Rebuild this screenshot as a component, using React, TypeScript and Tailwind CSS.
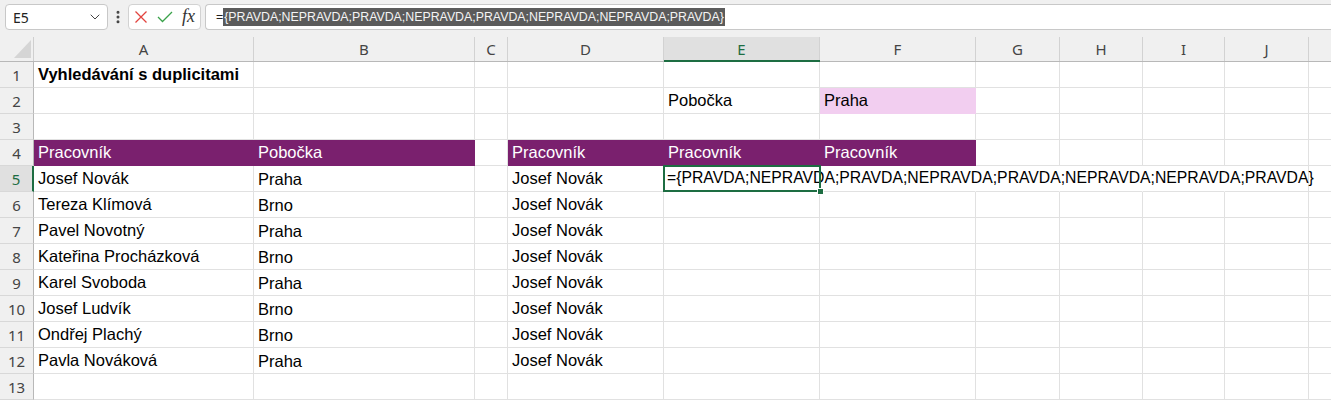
import React from "react";
import { ChevronDown, EllipsisVertical } from "lucide-react";

const COLS = [
  { key: "A", w: 221 },
  { key: "B", w: 221 },
  { key: "C", w: 33 },
  { key: "D", w: 156 },
  { key: "E", w: 156 },
  { key: "F", w: 156 },
  { key: "G", w: 84 },
  { key: "H", w: 83 },
  { key: "I", w: 82 },
  { key: "J", w: 84 },
  { key: "K", w: 40 },
];

const people: [string, string][] = [
  ["Josef Novák", "Praha"],
  ["Tereza Klímová", "Brno"],
  ["Pavel Novotný", "Praha"],
  ["Kateřina Procházková", "Brno"],
  ["Karel Svoboda", "Praha"],
  ["Josef Ludvík", "Brno"],
  ["Ondřej Plachý", "Brno"],
  ["Pavla Nováková", "Praha"],
];

const FORMULA = "{PRAVDA;NEPRAVDA;PRAVDA;NEPRAVDA;PRAVDA;NEPRAVDA;NEPRAVDA;PRAVDA}";

type CellSpec = {
  text?: string;
  bold?: boolean;
  fill?: "purple" | "pink";
  noRight?: boolean;
  lower?: boolean;
};

function getCell(row: number, col: string): CellSpec {
  if (row === 1 && col === "A") return { text: "Vyhledávání s duplicitami", bold: true };
  if (row === 2 && col === "E") return { text: "Pobočka" };
  if (row === 2 && col === "F") return { text: "Praha", fill: "pink" };
  if (row === 4) {
    if (col === "A") return { text: "Pracovník", fill: "purple" };
    if (col === "B") return { text: "Pobočka", fill: "purple" };
    if (col === "D" || col === "E" || col === "F") return { text: "Pracovník", fill: "purple" };
  }
  if (row >= 5 && row <= 12) {
    const p = people[row - 5];
    if (col === "A") return { text: p[0] };
    if (col === "B") return { text: p[1], lower: true };
    if (col === "D") return { text: "Josef Novák" };
  }
  if (row === 5 && ["E", "F", "G", "H", "I"].includes(col)) return { noRight: true };
  return {};
}

function Cell({ row, col, w }: { row: number; col: string; w: number }) {
  const spec = getCell(row, col);
  const isSel = row === 5 && col === "E";
  const fillCls =
    spec.fill === "purple"
      ? "bg-[#7a206e] text-white border-b-[#7a206e]"
      : spec.fill === "pink"
      ? "bg-[#f2cef0] text-black border-b-[#f2cef0]"
      : "bg-white text-black border-b-[#e1e1e1]";
  const rightCls = spec.fill
    ? spec.fill === "purple"
      ? "border-r-[#7a206e]"
      : "border-r-[#f2cef0]"
    : spec.noRight
    ? "border-r-white"
    : "border-r-[#e1e1e1]";
  return (
    <div
      className={`relative h-full shrink-0 border-r border-b flex items-end pl-[4px] ${fillCls} ${rightCls} ${
        isSel ? "overflow-visible z-10" : "overflow-hidden"
      }`}
      style={{ width: w }}
    >
      {spec.text && (
        <span
          className={`whitespace-nowrap leading-[20px] text-[16.5px] ${spec.bold ? "font-bold" : ""} ${
            spec.lower ? "mb-[2px]" : "mb-[3px]"
          }`}
        >
          {spec.text}
        </span>
      )}
      {isSel && (
        <>
          <span className="absolute left-[3px] bottom-[3px] whitespace-nowrap leading-[20px] text-[15.75px] text-black">
            ={FORMULA}
          </span>
          <div className="absolute left-[-1px] top-[-1px] w-[158px] h-[27px] border-2 border-[#1d6d42] pointer-events-none" />
          <div className="absolute right-[-5px] bottom-[-4px] w-[7px] h-[7px] bg-[#1d6d42] border border-white" />
        </>
      )}
    </div>
  );
}

export default function App() {
  const rows = Array.from({ length: 13 }, (_, i) => i + 1);
  return (
    <div
      className="w-[1331px] h-[400px] overflow-hidden bg-white"
      style={{ fontFamily: '"Liberation Sans", Arial, sans-serif' }}
    >
      {/* toolbar */}
      <div className="h-[30px] bg-[#f0f0f0] flex items-start pt-[4px] relative">
        <div className="ml-[5px] w-[103px] h-[26px] bg-white border border-[#c8c8c8] rounded-[4px] flex items-center justify-between pl-[7px] pr-[4px]">
          <span className="text-[14px] text-[#222]" style={{ fontFamily: '"Noto Sans", sans-serif' }}>
            E5
          </span>
          <ChevronDown size={16} strokeWidth={1.5} className="text-[#444]" />
        </div>
        <div className="w-[20px] h-[26px] flex items-center justify-center">
          <EllipsisVertical size={16} strokeWidth={2.5} className="text-[#444]" />
        </div>
        <div className="w-[73px] h-[26px] bg-white border border-[#d2d2d2] rounded-[4px] flex items-center pl-[5px] gap-[9px]">
          <svg width="14" height="14" viewBox="0 0 14 14">
            <path d="M1.5 1.5 L12.5 12.5 M12.5 1.5 L1.5 12.5" stroke="#e2443f" strokeWidth="1.3" fill="none" />
          </svg>
          <svg width="16" height="12" viewBox="0 0 16 12">
            <path d="M1 6 L5.5 10.5 L15 1" stroke="#3aa24a" strokeWidth="1.3" fill="none" />
          </svg>
          <span
            className="italic text-[18px] text-[#333] leading-none -mt-[2px]"
            style={{ fontFamily: '"Liberation Serif", "Times New Roman", serif' }}
          >
            fx
          </span>
        </div>
        <div className="ml-[4px] flex-1 h-[26px] bg-white border border-r-0 border-[#c8c8c8] rounded-l-[4px] flex items-center pl-[10px]">
          <span className="text-[12.3px] text-[#222]">=</span>
          <span className="text-[12.35px] text-[#f4f4f4] bg-[#5b5b5b] leading-[18px] px-[1px]">{FORMULA}</span>
        </div>
      </div>
      <div className="h-[7px] bg-[#f0f0f0]" />
      {/* column headers */}
      <div
        className="h-[25px] flex bg-[#f0f0f0] border-b border-[#b8b8b8]"
        style={{ fontFamily: '"Noto Sans", sans-serif' }}
      >
        <div className="w-[34px] shrink-0 h-full border-r border-[#cfcfcf] relative">
          <svg className="absolute left-[14px] top-[3px]" width="17" height="18" viewBox="0 0 17 18">
            <path d="M17 0 L17 18 L0 18 Z" fill="#d5d5d5" />
          </svg>
        </div>
        {COLS.map((c) => {
          const sel = c.key === "E";
          return (
            <div
              key={c.key}
              className={`shrink-0 h-full border-r border-[#d2d2d2] flex items-center justify-center text-[15px] relative ${
                sel ? "bg-[#e0e0e0] text-[#1d6d42]" : "text-[#444]"
              }`}
              style={{ width: c.w - (c.key === "A" ? 1 : 0) }}
            >
              {c.key !== "K" && c.key}
              {sel && <div className="absolute left-0 right-[-1px] bottom-[-1px] h-[2px] bg-[#1d6d42]" />}
            </div>
          );
        })}
      </div>
      {/* rows */}
      {rows.map((r) => (
        <div key={r} className="h-[26px] flex">
          <div
            className={`w-[34px] shrink-0 h-full border-b border-[#d8d8d8] flex items-center justify-center text-[15px] pt-[1px] ${
              r === 5
                ? "bg-[#e0e0e0] text-[#1d6d42] border-r-2 border-r-[#1d6d42]"
                : "bg-[#f0f0f0] text-[#444] border-r border-r-[#b8b8b8]"
            }`}
            style={{ fontFamily: '"Noto Sans", sans-serif' }}
          >
            {r}
          </div>
          {COLS.map((c) => (
            <Cell key={c.key} row={r} col={c.key} w={c.w - (c.key === "A" ? 1 : 0)} />
          ))}
        </div>
      ))}
    </div>
  );
}
